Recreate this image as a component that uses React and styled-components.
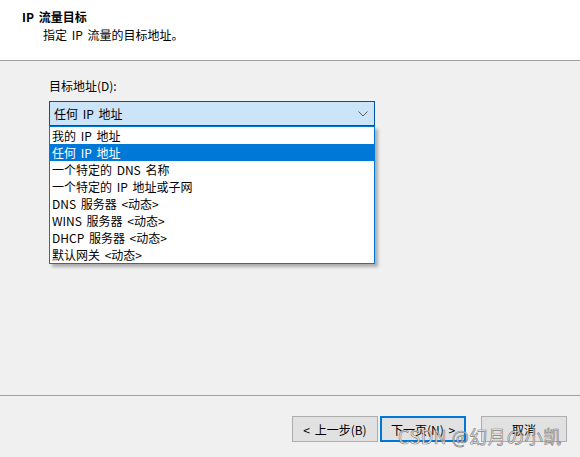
import styled, { createGlobalStyle } from 'styled-components';

const GlobalStyle = createGlobalStyle`
    html, body {
        margin: 0;
        padding: 0;
        background: #f0f0f0;
    }
    body {
        font-family: "Noto Sans CJK SC", "Noto Sans", sans-serif;
        font-size: 12px;
        color: #000;
    }
`;

const Wizard = styled.div`
    width: 580px;
    height: 457px;
    display: flex;
    flex-direction: column;
    position: relative;
    overflow: hidden;
`;

const Header = styled.div`
    height: 61px;
    background: #fff;
    border-bottom: 1px solid #a0a0a0;
    box-sizing: border-box;
    padding: 8px 0 0 22px;
    flex-shrink: 0;
    word-spacing: 2px;
`;

const Title = styled.div`
    font-weight: bold;
    line-height: 18px;
`;

const Subtitle = styled.div`
    padding-left: 21px;
    line-height: 18px;
`;

const Body = styled.div`
    flex: 1;
    padding: 16px 0 0 49px;
    border-bottom: 1px solid #a0a0a0;
`;

const Label = styled.div`
    line-height: 18px;
    margin-bottom: 6px;
`;

const Combo = styled.div`
    width: 326px;
    word-spacing: 2px;
`;

const ComboBox = styled.div`
    height: 25px;
    box-sizing: border-box;
    background: #cce4f7;
    border: 1px solid #005499;
    display: flex;
    align-items: center;
    justify-content: space-between;
    padding: 0 6px 0 4px;
`;

const DropList = styled.div`
    background: #fff;
    border: 1px solid #0078d7;
    box-shadow: 3px 3px 3px rgba(0, 0, 0, 0.28);
`;

const Item = styled.div`
    height: 17px;
    line-height: 17px;
    padding-left: 2px;
    background: ${p => (p.$active ? '#0078d7' : 'transparent')};
    color: ${p => (p.$active ? '#fff' : '#000')};
    white-space: nowrap;
`;

const Footer = styled.div`
    height: 61px;
    flex-shrink: 0;
    display: flex;
    justify-content: flex-end;
    align-items: flex-start;
    padding: 20px 13px 0 0;
    box-sizing: border-box;
`;

const Button = styled.button`
    width: 86px;
    height: 26px;
    box-sizing: border-box;
    background: #e1e1e1;
    border: ${p => (p.$default ? '2px solid #0078d7' : '1px solid #adadad')};
    font-family: inherit;
    font-size: 12px;
    word-spacing: 2px;
    color: #000;
    padding: 0;
    margin-left: ${p => p.$gap || 0}px;
`;

const Watermark = styled.div`
    position: absolute;
    left: 398px;
    top: 423px;
    font-size: 18px;
    line-height: 26px;
    font-family: "Noto Sans CJK SC", sans-serif;
    color: rgba(255, 255, 255, 0.85);
    -webkit-text-stroke: 0.7px rgba(100, 100, 100, 0.8);
    letter-spacing: 0.5px;
    pointer-events: none;
`;

const items = [
    '我的 IP 地址',
    '任何 IP 地址',
    '一个特定的 DNS 名称',
    '一个特定的 IP 地址或子网',
    'DNS 服务器 <动态>',
    'WINS 服务器 <动态>',
    'DHCP 服务器 <动态>',
    '默认网关 <动态>',
];

const Chevron = () => (
    <svg width="10" height="6" viewBox="0 0 10 6">
        <path d="M0.5 0.5 L5 5 L9.5 0.5" fill="none" stroke="#5a5a5a" strokeWidth="1" />
    </svg>
);

export default function App() {
    return (
        <Wizard>
            <GlobalStyle />
            <Header>
                <Title>IP 流量目标</Title>
                <Subtitle>指定 IP 流量的目标地址。</Subtitle>
            </Header>
            <Body>
                <Label>目标地址(D):</Label>
                <Combo>
                    <ComboBox>
                        <span>任何 IP 地址</span>
                        <Chevron />
                    </ComboBox>
                    <DropList>
                        {items.map((t, i) => (
                            <Item key={t} $active={i === 1}>{t}</Item>
                        ))}
                    </DropList>
                </Combo>
            </Body>
            <Footer>
                <Button>&lt; 上一步(B)</Button>
                <Button $default $gap={2}>下一页(N) &gt;</Button>
                <Button $gap={15}>取消</Button>
            </Footer>
            <Watermark>CSDN @幻月の小凯</Watermark>
        </Wizard>
    );
}
